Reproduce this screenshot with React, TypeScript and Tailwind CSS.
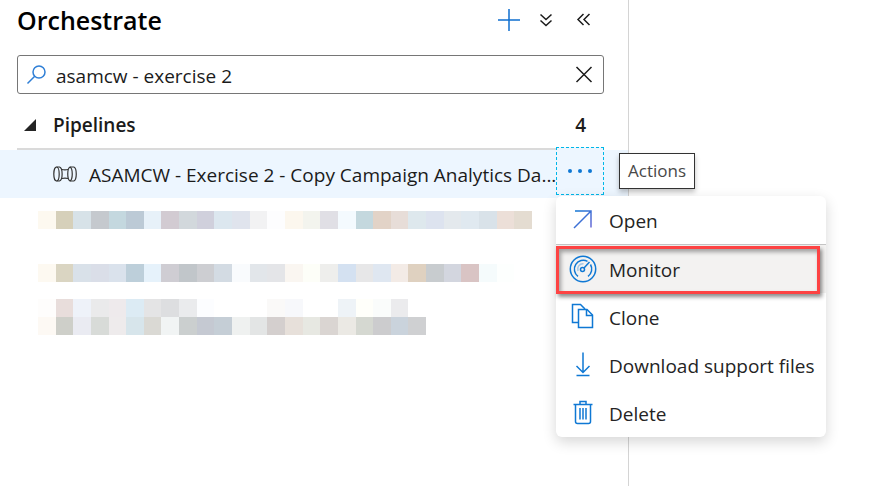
import { useState, type ReactNode } from "react";

const redactedRows: { id: string; gap: string; cells: string[] }[] = [
  {
    id: "a",
    gap: "mt-[13px]",
    cells: [
      "#fdf9f0", "#d6d0ba", "#d7e2e8", "#c5c9ce", "#c4d8df", "#bccad6", "#e7f1f9", "#d2cbd2", "#d2d8dc", "#d0d0dc",
      "#dce7ef", "#e0e4ed", "#f2f2f3", "#fdfdfe", "#fcf7ee", "#f3f4ee", "#e0dfe5", "#f4fafe", "#c4d8de", "#e2d3c7",
      "#e7ddd8", "#dee8ed", "#dde3ef", "#e4e9ed", "#e0e9f0", "#d9e2e9", "#ecdfd8", "#e4dcd1",
    ],
  },
  {
    id: "b",
    gap: "mt-[35px]",
    cells: [
      "#fdf9f1", "#dad5c2", "#d9e1e9", "#dadee8", "#dae2ec", "#bdcfda", "#e6f2fb", "#cfcdd3", "#c1c6ca", "#cdced2",
      "#d3dbe3", "#f9fbfd", "#e2e6ea", "#e4e5e8", "#faf6f1", "#fdfef8", "#eeeeec", "#d4e1f1", "#e7e7e8", "#dfe7f1",
      "#f3ebe6", "#dfd1c0", "#c8cccf", "#d3d6df", "#d9c4c4", "#f5fbfc", "#fdfffe", "#ffffff",
    ],
  },
  {
    id: "c",
    gap: "mt-[17px]",
    cells: [
      "#fefdfc", "#e8dddb", "#eef2f9", "#eaeaeb", "#eeeaec", "#dcebf4", "#e4e4e5", "#dddee0", "#eaebed", "#fcfdff",
      "#ffffff", "#ffffff", "#ffffff", "#faf9f8", "#f7f8fb", "#ffffff", "#ffffff", "#eef3f7", "#fffffa", "#fafcfb",
      "#ebebed", "#ffffff", "#ffffff", "#ffffff", "#ffffff", "#ffffff", "#ffffff", "#ffffff",
    ],
  },
  {
    id: "d",
    gap: "mt-0",
    cells: [
      "#fdf9f4", "#cecfc9", "#eaebf2", "#d8dbd8", "#eeebec", "#d7e5eb", "#dad9d4", "#f1f4f4", "#cbcfcf", "#c5c9d2",
      "#c5ced6", "#eff1f0", "#e3e5e5", "#d4cfce", "#e7e0da", "#e7e8e2", "#dad5d2", "#ebe9e4", "#d5d8d1", "#ccccce",
      "#cad3dc", "#cfd0d2", "#ffffff", "#ffffff", "#ffffff", "#ffffff", "#ffffff", "#ffffff",
    ],
  },
];

function Svg({ size, className = "", children }: { size: number; className?: string; children: ReactNode }) {
  return (
    <svg
      width={size}
      height={size}
      viewBox={`0 0 ${size} ${size}`}
      fill="none"
      stroke="currentColor"
      strokeWidth="1.5"
      className={`shrink-0 ${className}`}
      aria-hidden="true"
    >
      {children}
    </svg>
  );
}

const OpenIcon = () => (
  <Svg size={28}>
    <defs>
      <linearGradient id="openStroke" x1="0" y1="0" x2="1" y2="1">
        <stop offset="0" stopColor="#0f78d4" />
        <stop offset="1" stopColor="#6b69d6" />
      </linearGradient>
    </defs>
    <path d="M6 5H22V21.500M22 5L5 22" stroke="url(#openStroke)" />
  </Svg>
);

const MonitorIcon = () => (
  <Svg size={28}>
    <circle cx="14" cy="14" r="12.700" />
    <path d="M9 21.300A8.900 8.900 0 0 1 18.500 6.300M21.500 9.500A8.900 8.900 0 0 1 19 21.300" />
    <path d="M9 16A5.300 5.300 0 0 1 14.500 8.800" opacity="0.35" />
    <circle cx="13.500" cy="14.500" r="2" />
    <path d="M15 13L20.500 7" />
  </Svg>
);

const CloneIcon = () => (
  <Svg size={28}>
    <path d="M9.500 19.500H3.500V1.500H11.500L16 6" />
    <path d="M9.500 6.500H18L23.500 12V24.500H9.500Z" />
    <path d="M17.500 6.500V12.500H23.500" />
  </Svg>
);

const DownloadIcon = () => (
  <Svg size={28}>
    <path d="M14 1.500V21M7.500 15L14 21.500L20.500 15M7.500 24.500H20.500" />
  </Svg>
);

const DeleteIcon = () => (
  <Svg size={28}>
    <path d="M4.500 5.500H23.500M11 5.500V2.500H17V5.500M6.500 5.500V22.500Q6.500 24.500 8.500 24.500H19.500Q21.500 24.500 21.500 22.500V5.500" />
    <path d="M11 9V20.500M14 9V20.500M17 9V20.500" />
  </Svg>
);

const PipelineIcon = () => (
  <svg width="24" height="16" viewBox="0 0 24 16" fill="none" stroke="#333333" strokeWidth="1.200" className="shrink-0" aria-hidden="true">
    <ellipse cx="3.500" cy="8" rx="2.700" ry="7" />
    <path d="M3.500 1H6.500C10 2 10 14 6.500 15H3.500" />
    <path d="M8.800 3.500C11 4 13 4 15 3.500M8.800 12.500C11 12 13 12 15 12.500" />
    <path d="M21 1H17C14 2.500 14 13.500 17 15H21" />
    <path d="M17 1C20 2.500 20 13.500 17 15" />
    <path d="M21 1C24 2.500 24 13.500 21 15" />
  </svg>
);

const menuItems = [
  { label: "Open", icon: <OpenIcon /> },
  { label: "Monitor", icon: <MonitorIcon /> },
  { label: "Clone", icon: <CloneIcon /> },
  { label: "Download support files", icon: <DownloadIcon /> },
  { label: "Delete", icon: <DeleteIcon /> },
];

function ActionsMenu() {
  return (
    <ul
      role="menu"
      aria-label="Actions"
      className="absolute top-[49px] left-0 z-10 w-[270px] rounded-md bg-white shadow-[0_5px_14px_rgba(0,0,0,0.16)]"
    >
      {menuItems.map(({ label, icon }) => {
        const active = label === "Monitor";
        return (
          <li key={label} role="none" className={active ? "relative border-t border-[#c4c4c4] bg-[#f3f2f1]" : ""}>
            <button role="menuitem" className="flex h-12 w-full items-center gap-3 pl-[13px] text-left text-[19px] text-[#242424]">
              <span className="text-[#0f78d4]">{icon}</span>
              <span className="pt-[2px] whitespace-nowrap">{label}</span>
            </button>
            {active && (
              <span className="pointer-events-none absolute top-px right-[6px] -bottom-px left-0 border-[3px] border-[#fd4343] shadow-[2px_3px_4px_rgba(0,0,0,0.45),inset_2px_3px_4px_rgba(0,0,0,0.35)]" />
            )}
          </li>
        );
      })}
    </ul>
  );
}

export default function App() {
  const [query, setQuery] = useState("asamcw - exercise 2");

  return (
    <div className="flex min-h-screen bg-white font-['Open_Sans','Noto_Sans',sans-serif] text-[#1b1b1b]">
      <aside className="w-[629px] shrink-0 border-r border-[#d4d4d4]">
        <header className="flex h-[55px] items-start justify-between pr-[31px] pl-[17px]">
          <h1 className="pt-1 text-[25px] leading-8 font-semibold text-black">Orchestrate</h1>
          <div className="flex items-center gap-3 pt-[7px]">
            <button aria-label="Add" className="text-[#0f6fd0]">
              <Svg size={24}>
                <path d="M12 1V23M1 12H23" />
              </Svg>
            </button>
            <button aria-label="Expand all">
              <Svg size={26}>
                <path d="M7.500 7.500L13 12.500L18.500 7.500M7.500 13.500L13 18.500L18.500 13.500" />
              </Svg>
            </button>
            <button aria-label="Collapse panel">
              <Svg size={26}>
                <path d="M12.500 7L7 12.500L12.500 18M18.500 7L13 12.500L18.500 18" />
              </Svg>
            </button>
          </div>
        </header>

        <div className="mr-6 ml-[17px] flex h-[39px] items-center rounded-[3px] border border-[#767676] pr-[9px] pl-2">
          <Svg size={22} className="text-[#2f7fd6]">
            <circle cx="13" cy="8" r="6" />
            <path d="M8.700 12.300L1.500 19.500" />
          </Svg>
          <input
            aria-label="Filter resources by name"
            value={query}
            onChange={(event) => setQuery(event.target.value)}
            className="ml-2 h-full min-w-0 flex-1 bg-transparent pt-[2px] text-[19px] outline-none"
          />
          <button aria-label="Clear filter" onClick={() => setQuery("")}>
            <Svg size={20}>
              <path d="M2.500 2L17.500 17M17.500 2L2.500 17" />
            </Svg>
          </button>
        </div>

        <section>
          <div className="mr-6 ml-[17px] flex h-14 items-center border-b-2 border-[#dadada] pt-2 pr-[18px] pl-[7px] font-semibold">
            <svg width="12" height="12" viewBox="0 0 12 12" fill="#242424" aria-hidden="true">
              <path d="M12 0V12H0Z" />
            </svg>
            <h2 className="ml-[17px] flex-1 text-[19px]">Pipelines</h2>
            <span className="text-[19px]">4</span>
          </div>

          <div className="flex h-12 items-start bg-[#edf6ff] pr-6 pl-[53px]">
            <a href="#pipeline" className="flex h-12 min-w-0 flex-1 items-center gap-3">
              <PipelineIcon />
              <span className="pt-[2px] text-[19px] whitespace-nowrap">ASAMCW - Exercise 2 - Copy Campaign Analytics Da...</span>
            </a>
            <div className="relative -mt-[3px]">
              <button
                aria-label="More actions"
                aria-haspopup="menu"
                className="flex size-12 items-center justify-center border border-dashed border-[#00b7e8] bg-[#edf6ff] text-[#0f78d4]"
              >
                <svg width="26" height="6" viewBox="0 0 26 6" fill="currentColor" aria-hidden="true">
                  <circle cx="3" cy="3" r="2" />
                  <circle cx="13" cy="3" r="2" />
                  <circle cx="23" cy="3" r="2" />
                </svg>
              </button>
              <span
                role="tooltip"
                className="absolute top-[6px] left-[63px] flex h-9 items-center border border-[#333333] bg-white px-2 text-[17px] whitespace-nowrap text-[#484848] shadow-[0_3px_5px_rgba(0,0,0,0.25)]"
              >
                Actions
              </span>
              <ActionsMenu />
            </div>
          </div>

          <div aria-hidden="true" className="ml-[38px] w-[494px]">
            {redactedRows.map(({ id, gap, cells }) => (
              <div key={id} className={`flex h-[18px] ${gap}`}>
                {cells.map((color, index) => (
                  <span key={index} className="flex-1" style={{ backgroundColor: color }} />
                ))}
              </div>
            ))}
          </div>
        </section>
      </aside>
      <main className="flex-1" />
    </div>
  );
}
